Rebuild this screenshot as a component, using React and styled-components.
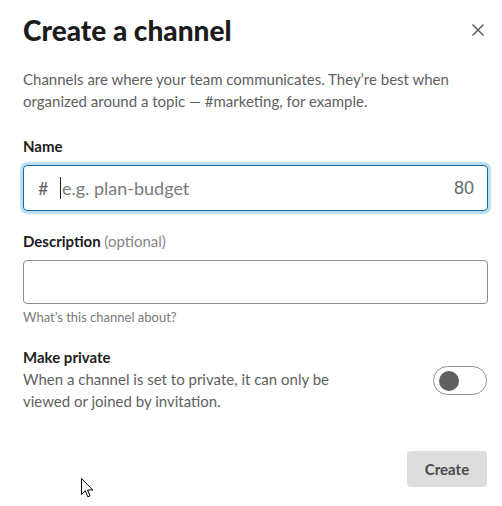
import React from 'react'
import styled, { createGlobalStyle } from 'styled-components'

const GlobalStyle = createGlobalStyle`
  html, body {
    margin: 0;
    padding: 0;
    background: #ffffff;
  }
  body {
    font-family: Lato, "Noto Sans", "Liberation Sans", sans-serif;
    color: #1d1c1d;
    -webkit-font-smoothing: antialiased;
  }
`

const Modal = styled.div`
  position: relative;
  width: 502px;
  height: 506px;
  box-sizing: border-box;
  padding: 12px 14px 0 23px;
  display: flex;
  flex-direction: column;
`

const Header = styled.div`
  display: flex;
  align-items: center;
  justify-content: space-between;
`

const Title = styled.h1`
  margin: 0;
  font-size: 28px;
  line-height: 36px;
  font-weight: 900;
  color: #1d1c1d;
`

const Close = styled.button`
  width: 24px;
  height: 24px;
  margin-right: -2px;
  padding: 0;
  border: none;
  background: transparent;
  display: flex;
  align-items: center;
  justify-content: center;
  cursor: pointer;
`

const Intro = styled.p`
  margin: 20px 0 0;
  font-size: 15px;
  line-height: 22px;
  color: #616061;
`

const Label = styled.label`
  display: block;
  margin-top: ${props => props.$top}px;
  font-size: 15px;
  line-height: 22px;
  font-weight: 700;
  color: #1d1c1d;
`

const Optional = styled.span`
  font-weight: 400;
  color: #868686;
`

const NameField = styled.div`
  margin-top: 8px;
  height: 46px;
  box-sizing: border-box;
  border: 1px solid #1264a3;
  border-radius: 4px;
  box-shadow: 0 0 0 3px #bde0f0;
  display: flex;
  align-items: center;
  padding: 0 13px 0 14px;
`

const Hash = styled.span`
  font-size: 18px;
  color: #616061;
  width: 22px;
`

const Caret = styled.span`
  width: 1px;
  height: 22px;
  background: #1d1c1d;
`

const Placeholder = styled.span`
  flex: 1;
  font-size: 18px;
  color: #7a7a7a;
  padding-left: 1px;
`

const Counter = styled.span`
  font-family: "Liberation Sans", Arial, sans-serif;
  font-size: 18px;
  color: #696969;
`

const TextBox = styled.div`
  margin-top: 8px;
  height: 44px;
  box-sizing: border-box;
  border: 1px solid #8d8d8d;
  border-radius: 4px;
`

const Hint = styled.div`
  margin-top: 4px;
  font-size: 13px;
  line-height: 18px;
  color: #7a7a7a;
`

const PrivateRow = styled.div`
  display: flex;
  align-items: flex-start;
  justify-content: space-between;
  margin-top: 20px;
`

const PrivateText = styled.div`
  width: 330px;
`

const PrivateTitle = styled.div`
  font-size: 15px;
  line-height: 22px;
  font-weight: 700;
  color: #1d1c1d;
`

const PrivateDesc = styled.div`
  font-size: 15px;
  line-height: 22px;
  color: #616061;
`

const Toggle = styled.div`
  margin-top: 20px;
  margin-right: 1px;
  width: 54px;
  height: 29px;
  box-sizing: border-box;
  border: 1px solid #8d8d8d;
  border-radius: 15px;
  display: flex;
  align-items: center;
  padding-left: 5px;
`

const Knob = styled.div`
  width: 20px;
  height: 20px;
  border-radius: 50%;
  background: #616061;
`

const Footer = styled.div`
  display: flex;
  justify-content: flex-end;
  margin-top: 39px;
`

const CreateButton = styled.button`
  width: 80px;
  height: 36px;
  margin-right: 1px;
  border: none;
  border-radius: 4px;
  background: #dddddd;
  color: #4a4a4a;
  font-family: Lato, "Noto Sans", sans-serif;
  font-size: 15px;
  font-weight: 700;
  cursor: default;
`

const Pointer = styled.svg`
  position: absolute;
  left: 81px;
  top: 478px;
`

export default function App() {
  return (
    <>
      <GlobalStyle />
      <Modal>
        <Header>
          <Title>Create a channel</Title>
          <Close aria-label="Close">
            <svg width="12" height="12" viewBox="0 0 12 12">
              <path d="M1 1 L11 11 M11 1 L1 11" stroke="#616061" strokeWidth="1.6" strokeLinecap="round" />
            </svg>
          </Close>
        </Header>
        <Intro>
          Channels are where your team communicates. They’re best when organized around a topic — #marketing, for example.
        </Intro>

        <Label $top={23}>Name</Label>
        <NameField>
          <Hash>#</Hash>
          <Caret />
          <Placeholder>e.g. plan-budget</Placeholder>
          <Counter>80</Counter>
        </NameField>

        <Label $top={19}>
          Description <Optional>(optional)</Optional>
        </Label>
        <TextBox />
        <Hint>What’s this channel about?</Hint>

        <PrivateRow>
          <PrivateText>
            <PrivateTitle>Make private</PrivateTitle>
            <PrivateDesc>When a channel is set to private, it can only be viewed or joined by invitation.</PrivateDesc>
          </PrivateText>
          <Toggle>
            <Knob />
          </Toggle>
        </PrivateRow>

        <Footer>
          <CreateButton>Create</CreateButton>
        </Footer>

        <Pointer width="13" height="20" viewBox="0 0 13 20">
          <path d="M0.5 0.5 L0.5 16.5 L4.3 12.8 L6.8 18.8 L9 17.9 L6.6 12 L11.8 12 Z" fill="#ffffff" stroke="#000000" strokeWidth="1" strokeLinejoin="miter" />
        </Pointer>
      </Modal>
    </>
  )
}
